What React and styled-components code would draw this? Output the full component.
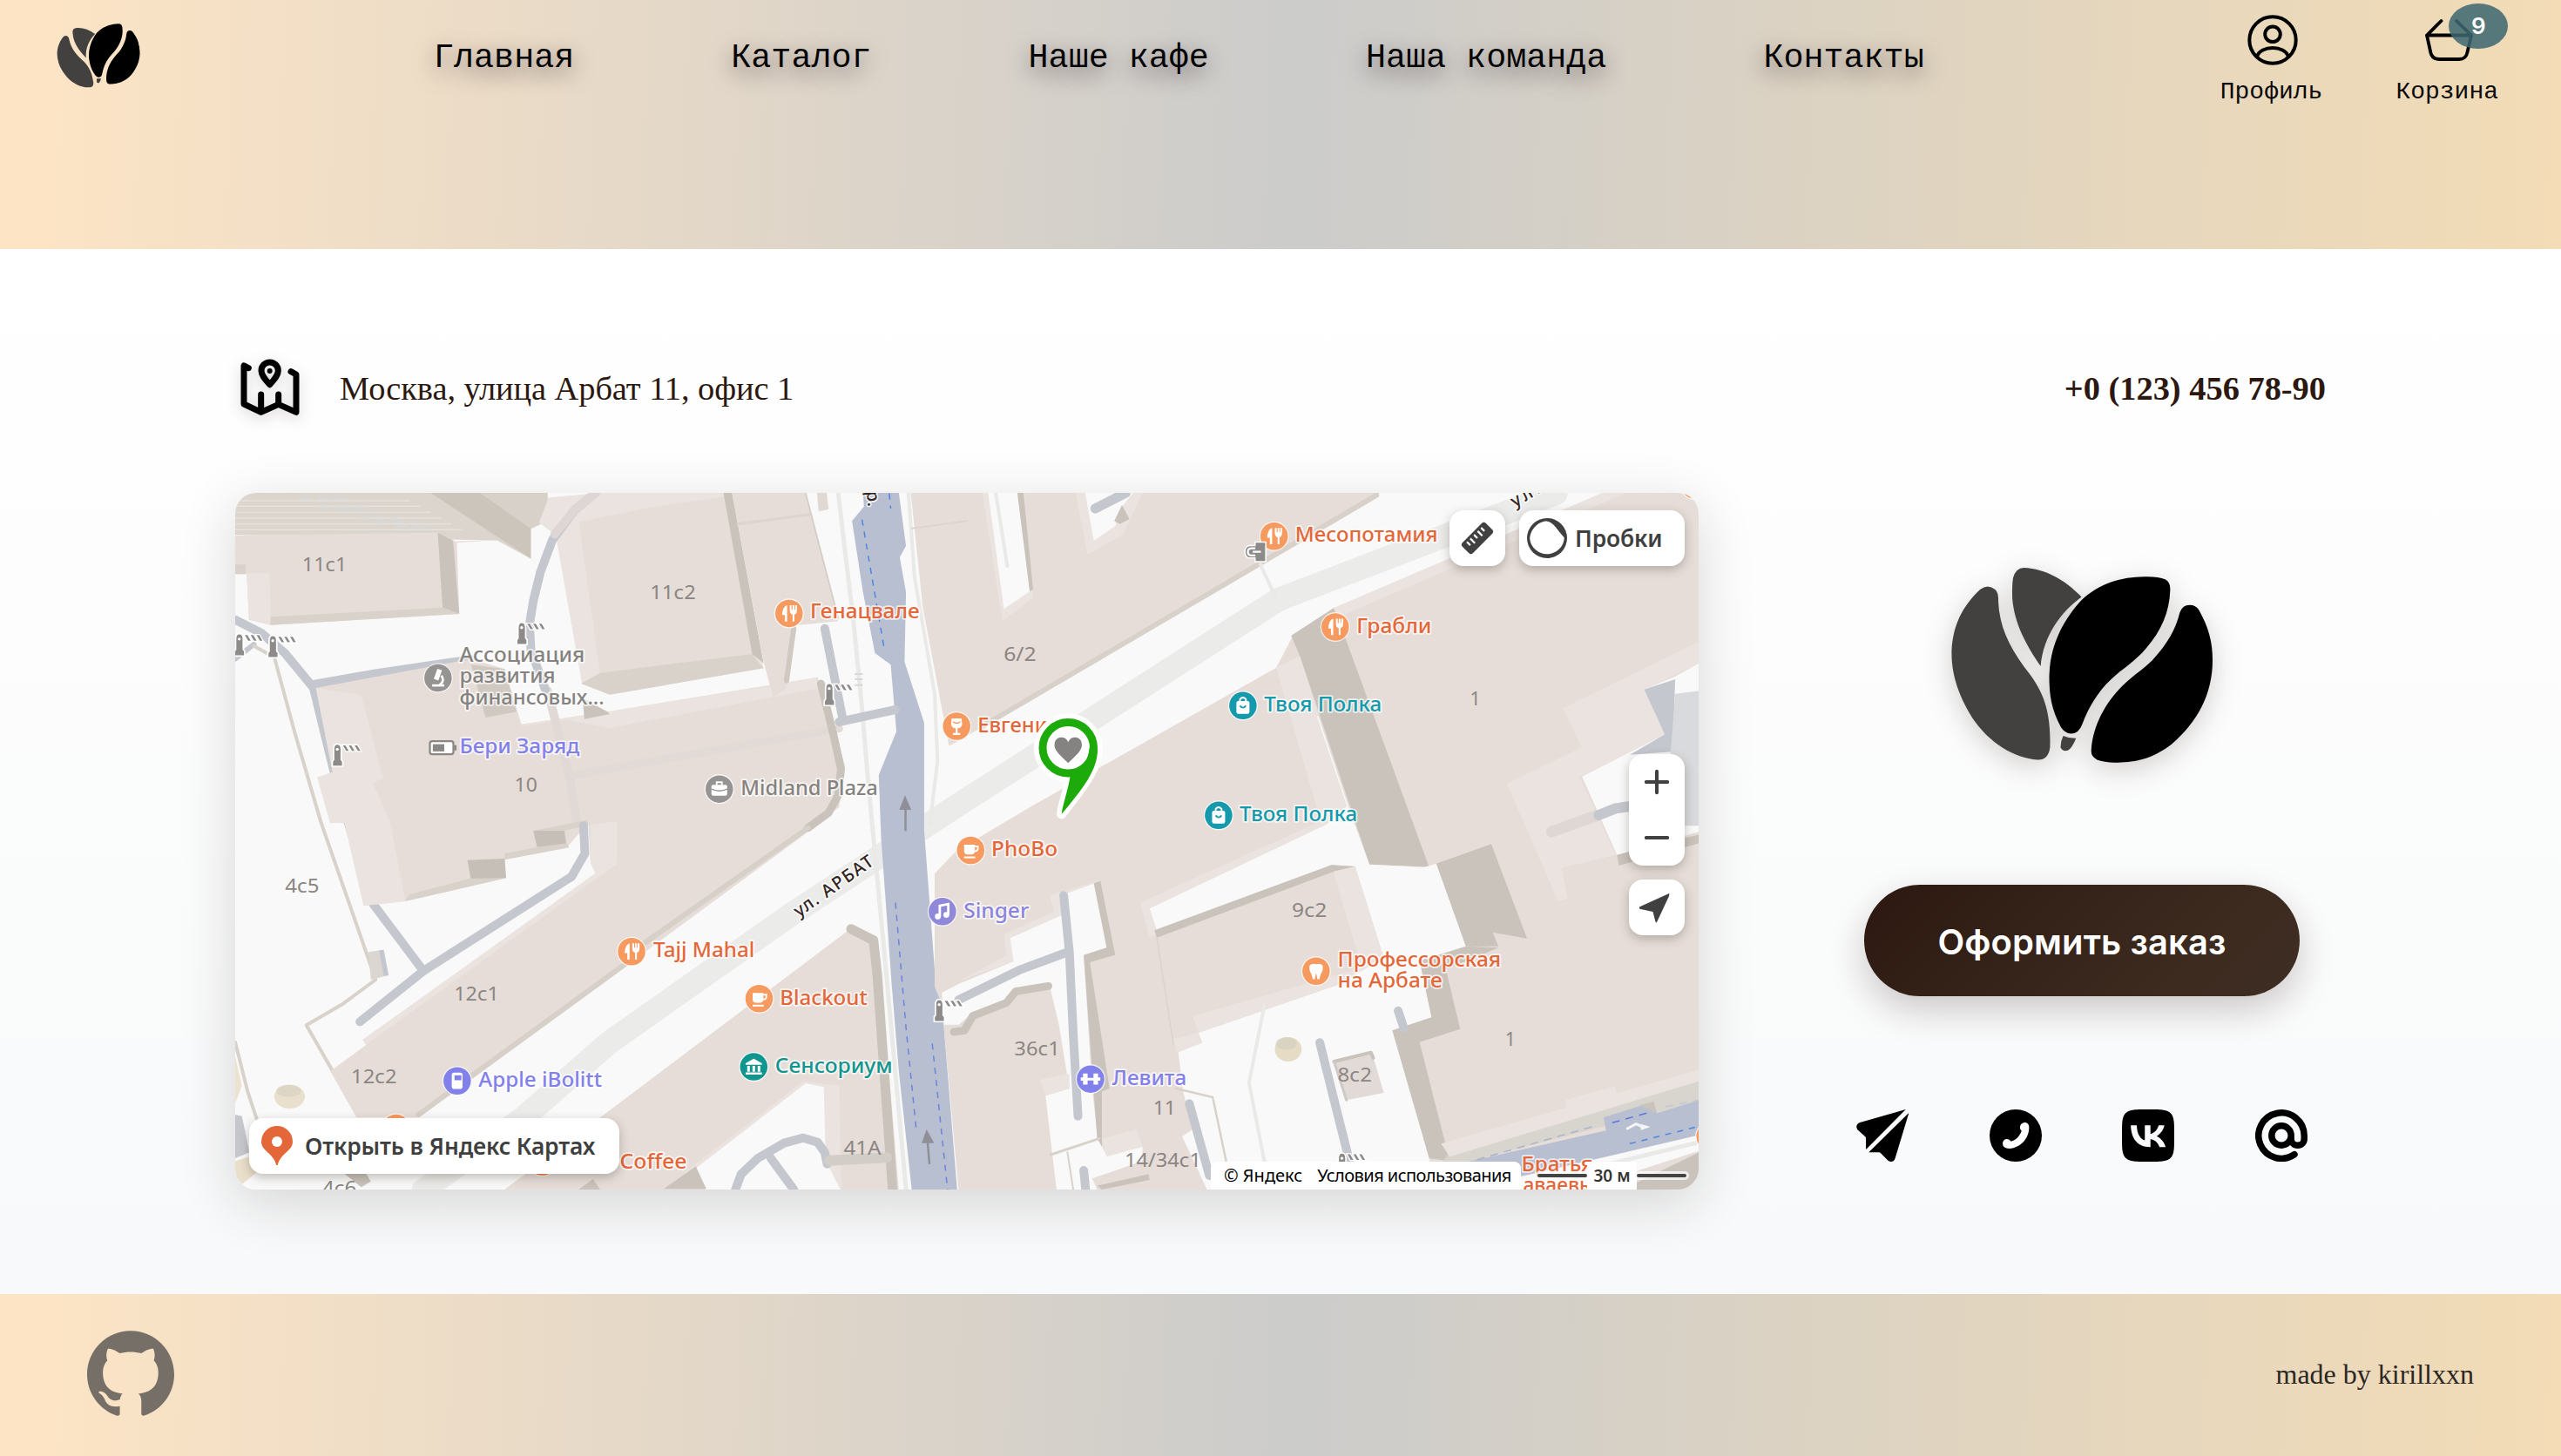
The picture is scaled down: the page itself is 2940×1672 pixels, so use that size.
import React from "react";
import styled, { createGlobalStyle } from "styled-components";
import { SiGithub, SiVk } from "react-icons/si";

const GlobalStyle = createGlobalStyle`
  *, *::before, *::after { box-sizing: border-box; }
  body {
    margin: 0;
    font-family: "Liberation Serif", "Times New Roman", serif;
    background: #fce5c7;
  }
`;

const mono = `"Liberation Mono", "Courier New", monospace`;
const serif = `"Liberation Serif", "Times New Roman", serif`;
const mapFont = `"Noto Sans", sans-serif`;
const warmGradient = `linear-gradient(92deg, #fce4c5 2%, #cccccb 50.5%, #f3dcb6 100%)`;

const Page = styled.div`
  display: flex;
  flex-direction: column;
  width: 2940px;
  height: 1672px;
  overflow: hidden;
`;

const Header = styled.header`
  display: flex;
  align-items: flex-start;
  flex: 0 0 286px;
  padding-left: 66px;
  padding-right: 72px;
  background: ${warmGradient};
`;

const HeaderLogo = styled.a`
  display: block;
  width: 432px;
  padding-top: 28px;
  svg {
    display: block;
    width: 95px;
    height: 71px;
    transform: rotate(-10deg);
  }
`;

const Nav = styled.nav`
  display: flex;
  gap: 180px;
  padding-top: 45px;
`;

const NavLink = styled.a`
  font: 400 38.4px/44px ${mono};
  color: #050505;
  white-space: pre;
  text-shadow: 0 8px 24px rgba(40, 30, 40, 0.6);
`;

const Actions = styled.div`
  display: flex;
  gap: 84px;
  margin-left: auto;
`;

const Action = styled.a`
  position: relative;
  display: flex;
  flex-direction: column;
  align-items: center;
  font: 400 28px/32px ${mono};
  color: #0a0a0a;
  svg {
    display: block;
    width: 64px;
    height: 64px;
    margin: 14px 0 12px;
  }
`;

const Badge = styled.span`
  position: absolute;
  top: 4px;
  left: 61px;
  display: flex;
  align-items: center;
  justify-content: center;
  width: 68px;
  height: 52px;
  border-radius: 50%;
  background: rgba(62, 104, 112, 0.86);
  color: #fff;
  font: 600 26px/1 Inter, sans-serif;
`;

const Contacts = styled.main`
  display: flex;
  flex-direction: column;
  gap: 80px;
  flex: 0 0 1200px;
  padding: 120px 270px;
  background: linear-gradient(180deg, #ffffff 0%, #f8f9fa 100%);
`;

const InfoRow = styled.div`
  display: flex;
  align-items: center;
  justify-content: space-between;
  height: 80px;
  color: #2c1810;
`;

const Address = styled.div`
  display: flex;
  align-items: center;
  gap: 40px;
  font: 400 38.4px/48px ${serif};
  letter-spacing: -0.05px;
  svg {
    width: 80px;
    height: 80px;
    filter: drop-shadow(0 4px 8px rgba(44, 24, 16, 0.18));
  }
`;

const Phone = styled.a`
  font: 700 38.4px/48px ${serif};
`;

const Columns = styled.div`
  display: flex;
  gap: 160px;
  height: 800px;
`;

const MapFrame = styled.section`
  position: relative;
  width: 1680px;
  height: 800px;
  border-radius: 24px;
  box-shadow: 0 16px 64px rgba(30, 24, 20, 0.16);
`;

const MapCanvas = styled.div`
  position: absolute;
  inset: 0;
  overflow: hidden;
  border-radius: 24px;
  background: #f9f9f9;
  font-family: ${mapFont};
  svg.layer {
    position: absolute;
    inset: 0;
    width: 1680px;
    height: 800px;
  }
`;

const MapControl = styled.button`
  position: absolute;
  top: ${(p) => p.$top}px;
  left: ${(p) => p.$left}px;
  width: ${(p) => p.$width || 64}px;
  height: ${(p) => p.$height || 64}px;
  display: flex;
  align-items: center;
  justify-content: ${(p) => (p.$row ? "flex-start" : "center")};
  flex-direction: ${(p) => (p.$column ? "column" : "row")};
  gap: ${(p) => p.$gap || 0}px;
  padding: 0 ${(p) => p.$pad || 0}px;
  border: 0;
  border-radius: 16px;
  background: #fff;
  color: #3f3f3f;
  box-shadow: 0 4px 12px rgba(60, 50, 40, 0.3);
  font: 600 26.4px/1 ${mapFont};
  letter-spacing: -0.15px;
  white-space: nowrap;
`;

const Attribution = styled.div`
  position: absolute;
  left: 1120px;
  bottom: 0;
  display: flex;
  align-items: center;
  gap: 17px;
  width: 356px;
  height: 32px;
  padding-left: 15px;
  border-radius: 8px 8px 0 0;
  background: #fff;
  color: #000;
  font: 400 20px/1 ${mapFont};
  white-space: nowrap;
`;

const Terms = styled.span`
  letter-spacing: -0.55px;
`;

const ScaleBar = styled.div`
  position: absolute;
  left: 1495px;
  bottom: 0;
  display: flex;
  align-items: center;
  width: 171px;
  height: 32px;
  font: 600 19px/1 ${mapFont};
  color: #333;
`;

const ScaleLine = styled.span`
  width: ${(p) => p.$width}px;
  height: 4px;
  border-radius: 2px;
  background: #444;
  box-shadow: 0 0 0 3px rgba(255, 255, 255, 0.7);
`;

const ScaleText = styled.span`
  display: flex;
  align-items: center;
  justify-content: center;
  width: 57px;
  height: 32px;
  background: #fff;
`;

const Side = styled.aside`
  display: flex;
  flex-direction: column;
  align-items: center;
  width: 560px;
  padding-top: 86px;
`;

const SideLogo = styled.div`
  svg {
    display: block;
    width: 300px;
    height: 224px;
    filter: drop-shadow(0 8px 16px rgba(44, 24, 16, 0.2));
  }
`;

const OrderButton = styled.button`
  width: 500px;
  height: 128px;
  margin-top: 140px;
  padding: 4px 0 0;
  border: 0;
  border-radius: 64px;
  background: linear-gradient(135deg, #2c1810 0%, #3d2b20 75%, #3e2d23 100%);
  box-shadow: 0 16px 40px rgba(44, 24, 16, 0.22);
  color: #fff;
  font: 600 40px/1 Inter, sans-serif;
  letter-spacing: 0.1px;
`;

const Socials = styled.div`
  display: flex;
  gap: 92.4px;
  margin-top: 130px;
  color: #000;
  svg {
    display: block;
    width: 60px;
    height: 60px;
  }
`;

const Footer = styled.footer`
  display: flex;
  align-items: flex-start;
  justify-content: space-between;
  flex: 0 0 186px;
  padding: 41px 100px 0;
  background: ${warmGradient};
  svg {
    width: 100px;
    height: 100px;
    color: #756f67;
  }
`;

const Credit = styled.span`
  padding-top: 32px;
  font: 400 32px/38px ${serif};
  color: #2a2724;
`;

/* ---------- drawings ---------- */

const Beans = () => (
  <svg viewBox="358 762 672 628" preserveAspectRatio="none">
    <g fill="#424140">
      <path d="M432,832 Q452,812 471,832 Q480,842 479,870 C482,950 505,1010 545,1080 C590,1150 615,1210 612,1340 Q608,1381 580,1380 C520,1376 455,1325 412,1245 C370,1160 358,1090 359,1030 C362,950 385,888 432,832Z" />
      <path d="M545,762 C600,765 650,800 693,856 C640,905 595,980 588,1079 C550,1010 520,940 515,860 Q514,820 517,795 Q524,762 545,762Z" />
      <path d="M646,1303 Q662,1312 679,1311 Q668,1345 658,1350 Q645,1355 639,1340 Q639,1320 646,1303Z" />
    </g>
    <path d="M855,791 Q890,790 908,799 Q922,808 921,835 C919,905 898,965 860,1020 C830,1065 800,1085 770,1120 C735,1160 710,1215 695,1265 Q686,1296 666,1296 Q650,1295 640,1275 C615,1215 610,1170 610,1110 C612,1020 640,940 690,870 C740,810 795,792 855,791Z" />
    <path d="M946,905 Q953,882 971,882 Q987,882 995,898 C1020,955 1030,1000 1030,1060 C1030,1170 990,1260 925,1330 C875,1378 830,1390 780,1389 Q750,1388 733,1380 Q717,1370 718,1350 C722,1270 755,1195 800,1140 C830,1105 855,1085 875,1060 C915,1005 935,960 946,905Z" />
  </svg>
);

const PersonIcon = () => (
  <svg viewBox="-1 0 64 64" fill="none" stroke="#000" strokeWidth="4">
    <circle cx="32" cy="32" r="26.7" />
    <circle cx="32" cy="25.3" r="8.8" />
    <path d="M14 51 C18 37.5 46 37.5 50 51" />
  </svg>
);

const BasketIcon = () => (
  <svg viewBox="0 0 64 64" fill="none" stroke="#000" strokeWidth="3.8" strokeLinecap="round" strokeLinejoin="round">
    <path d="M25.5 10 L9 26.5 H60 L43 10 M9 26.5 L13.5 47 Q15.5 54 23 54 H46 Q54 54 55.5 46 L60 26.5" />
  </svg>
);

const MapPinIcon = () => (
  <svg viewBox="0 0 24 24" fill="none" stroke="#000" strokeWidth="2.1" strokeLinecap="round" strokeLinejoin="round">
    <path d="M4.6 5 L3 4.2 V17.4 L8.9 20.2 L14.9 17.5 L21 20.2 V7.2 L19.2 6.2 M8.9 14.1 V20 M14.9 14.1 V17.4" />
    <path d="M11.9 10.7 C10 8.6 9 7.4 9 5.9 A2.9 2.9 0 0 1 14.8 5.9 C14.8 7.4 13.8 8.6 11.9 10.7Z" />
    <circle cx="11.9" cy="6" r=".9" fill="#000" stroke="none" />
  </svg>
);

const PlaneIcon = () => (
  <svg viewBox="58 72 168 180" preserveAspectRatio="none">
    <path d="M217,72 L70,117 Q57,122 59,134 Q60,141 65,145 L86,165 Q89,168 89,172 V205 Q88,211 92,207 Z" />
    <path d="M227,84 L183,240 Q180,252 169,252 Q163,252 158,246 L138,224 Q134,220 130,220 H98 Z" />
  </svg>
);

const PhoneIcon = () => (
  <svg viewBox="487 72 168 180" preserveAspectRatio="none">
    <ellipse cx="571" cy="162" rx="84" ry="90" />
    <path
      fill="#fff"
      d="M588,123 Q596,115 605,118 Q613,121 614,132 C615,168 590,204 550,207 Q530,207 529,190 Q530,177 540,174 Q550,172 556,182 C571,178 583,165 590,146 Q580,137 588,123Z"
    />
  </svg>
);

const AtIcon = () => (
  <svg viewBox="0 0 60 60" fill="none" stroke="#000" strokeWidth="7.5" strokeLinecap="round">
    <path d="M45 51.6 A26.2 26.2 0 1 1 56.2 30 V34 A7.4 7.2 0 0 1 41.2 34" />
    <circle cx="30" cy="30" r="11.2" />
  </svg>
);

const WHITE = "#f9f9f9";
const ROOF = "#e6ddd8";
const LIGHT = "#eae3df";
const WALL = "#c9c3bb";
const SOFT = "#d9d2ca";
const RIVER = "#b8bfd0";
const LANE = "#c5c7cf";
const PATH = "#e9e9e7";

const Shape = ({ p, f }) => <polygon points={p} fill={f} />;
const Line = ({ p, s = LANE, w = 10, dash }) => (
  <polyline
    points={p}
    fill="none"
    stroke={s}
    strokeWidth={w}
    strokeDasharray={dash}
    strokeLinecap={dash ? "butt" : "round"}
    strokeLinejoin="round"
    vectorEffect="non-scaling-stroke"
  />
);

const MapBase = () => (
  <svg className="layer" viewBox="36 558 3063 2400" preserveAspectRatio="none">
    {/* street axis */}
    <Line p="2800,560 2220,925 1550,1632 1200,2010 820,2450 640,2710 430,2960" s="#ebebea" w={27} />

    {/* courtyard hall */}
    <Shape p="36,558 450,558 655,785 585,722 36,702" f="#dbd5cd" />
    {[585, 604, 625, 645, 665, 685].map((y, i) => (
      <Line key={y} p={`36,${y} ${400 + i * 22},${y}`} s="#e6e1db" w={1.5} />
    ))}
    {[580, 606, 622, 648, 660, 673].map((y, i) => (
      <Line key={y} p={`${170 + i * 40},${y} ${270 + i * 35},${y}`} s="#d6dbdf" w={1.5} dash="14 6" />
    ))}
    <Shape p="445,558 550,558 655,680 655,785" f="#cbc5bc" />
    <Shape p="550,558 690,558 690,655 655,682" f="#d8d1ca" />
    <Shape p="672,660 692,575 800,558 700,695" f={LIGHT} />

    {/* 11c1 */}
    <Shape p="36,704 460,695 497,725 585,720 500,730 505,975 110,1013 65,995 60,838 36,838" f={ROOF} />
    <Shape p="60,835 108,835 110,1013 65,992" f={LIGHT} />
    <Shape p="36,805 58,805 58,838 36,838" f={SOFT} />
    <Shape p="460,695 492,722 505,975 470,953" f={WALL} />
    <Shape p="110,985 470,953 505,975 110,1013" f={SOFT} />

    {/* lanes on the left */}
    <Line p="36,995 90,1040 140,1110 200,1230 225,1400 255,1600 325,1975 430,2205" />
    <Line p="200,1218 330,1180 530,1132" />
    <Line p="36,1130 75,1080" w={6} />
    <Line p="75,1085 118,1125 160,1380 215,1690 330,2235 260,2320 185,2392 240,2550" s="#d8d2ca" w={4} />

    {/* block 10 / 12c1 */}
    <Shape
      p="205,1230 530,1130 600,1165 635,1355 820,1312 1255,1193 1290,1360 1312,1500 1300,1640 1240,1720 860,2180 415,2710 290,2710 235,2550 310,2460 303,2442 800,1862 780,1835 775,1695 730,1780 600,1820 603,1885 390,1965 305,1980 265,1695 235,1695 208,1538 240,1520"
      f={ROOF}
    />
    <Shape p="205,1230 300,1255 345,1540 325,1560 360,1690 392,1965 305,1980 265,1695 235,1695 208,1538 240,1520" f={LIGHT} />
    <Shape p="780,1700 835,1690 835,1835 310,2460 303,2442 790,1868 780,1835" f={LIGHT} />
    <Shape p="635,1355 820,1310 1250,1195 1262,1230 820,1368 730,1340 635,1362" f={LIGHT} />
    <Line p="690,1240 715,1400 735,1530 752,1700" s="#e0d9d6" w={10} />
    <Line p="745,1530 1300,1370" s="#e2dad6" w={9} />
    <Shape p="530,1150 600,1165 625,1312 560,1332" f="#cfc9c1" />
    <Shape p="763,1265 815,1312 820,1320 767,1337" f={WALL} />
    <Shape p="660,1722 725,1722 730,1778 668,1778" f="#c5bfb7" />
    <Shape p="522,1823 600,1818 603,1885 530,1895" f="#c5bfb7" />
    <Shape p="600,1800 670,1778 730,1765 735,1780 600,1822" f={SOFT} />
    <Shape p="392,1965 603,1885 528,1886 400,1942" f={SOFT} />
    <Shape p="660,1722 772,1685 776,1702 725,1722" f={SOFT} />
    <Line p="1262,1215 1288,1390 1304,1510 1298,1600 1278,1660 1235,1712" s={WALL} w={9} />
    <Line p="1235,1712 890,2112 860,2172 420,2700" s="#d6d0c8" w={6} />
    <Line p="765,1705 768,1800 740,1880 430,2205 297,2380" />
    <Shape p="315,2140 345,2132 357,2220 320,2235" f="#dcd6d2" />
    <Shape p="337,2134 347,2132 357,2220 347,2222" f={LANE} />

    {/* 11c2 */}
    <Shape p="690,575 800,558 1060,558 1142,1162 820,1253 762,1215 708,715" f={LIGHT} />
    <Shape p="755,658 900,610 1062,570 1118,1113 800,1180" f={ROOF} />
    <Shape p="760,1215 800,1178 1118,1113 1142,1162 820,1253" f={SOFT} />
    <Shape p="1058,558 1076,558 1142,1145 1118,1113" f={WALL} />
    <Line p="790,558 745,620 700,720 675,830 660,930 652,1010 655,1100 685,1235" />
    <Line p="790,558 745,620 705,700" s="#ddd6d4" />
    <Shape p="1076,558 1228,558 1298,1000 1208,1015 1190,1230 1162,1262 1142,1140" f={ROOF} />
    <Line p="1088,665 1240,632" s="#dcd4ce" w={3} />
    <Line p="1230,560 1298,990" s="#d5cec6" w={2} />
    <Line p="1205,1025 1190,1205" s="#cfc9c2" w={6} />
    <Shape p="1254,558 1274,558 1278,615 1257,622" f="#e0d8d2" />

    {/* embankment road */}
    <Line p="1298,558 1330,1000 1348,1300 1358,1500 1375,1800 1398,2200 1440,2958" s={PATH} w={5} />
    <Line p="1445,558 1458,850 1500,1250 1506,1480 1490,1700" s={PATH} w={4} />
    <Shape
      p="1350,558 1425,558 1440,740 1427,780 1440,900 1437,1140 1478,1350 1478,1720 1500,2200 1516,2330 1547,2958 1452,2958 1425,2550 1410,2250 1388,1750 1383,1530 1420,1380 1408,1150 1375,1110 1350,900 1327,655 1352,605"
      f={RIVER}
    />
    <Line p="1348,650 1395,1100" s="#4d86e0" w={1.5} dash="7 7" />
    <Line p="1405,560 1408,612" s="#4d86e0" w={1.5} dash="7 7" />
    <Line p="1418,1970 1440,2400 1461,2745" s="#6d83dc" w={1.5} dash="7 7" />
    <Line p="1495,2455 1527,2958" s="#6d83dc" w={1.5} dash="7 7" />
    <Line p="1439,1720 1439,1640" s="#8f9097" w={2.5} />
    <Shape p="1438,1600 1451,1650 1426,1650" f="#8f9097" />
    <Line p="1489,2868 1485,2790" s="#8f9097" w={2.5} />
    <Shape p="1483,2750 1499,2798 1473,2798" f="#8f9097" />
    <Line p="1270,1025 1308,1340" />
    <Line p="1300,1347 1418,1305" />
    {[1182, 1200, 1220].map((y) => (
      <Line key={y} p={`1334,${y} 1348,${y}`} s="#d8d8d8" w={2} />
    ))}

    {/* 6/2 */}
    <Shape p="1450,558 2432,558 1568,1395 1530,1430 1515,1300 1475,950" f={ROOF} />
    <Line p="2425,566 1600,1362" s="#d8d1c9" w={6} />
    <Line p="1452,680 1568,655" s="#dcd4ce" w={2} />
    <g transform="translate(1550 480)">
      <Shape p="50,78 138,78 155,440 92,520" f={LIGHT} />
      <Shape p="62,78 125,78 149,418 95,478" f={WHITE} />
      <Shape p="123,78 136,78 156,410 149,418" f={WALL} />
      <Line p="78,80 102,330" s={PATH} w={4} />
      <Shape p="245,78 385,78 345,220 270,290" f={LIGHT} />
      <Shape p="265,78 365,78 345,120 328,175 330,190 283,242" f={WHITE} />
      <Shape p="342,120 358,168 338,185 326,175" f={WALL} />
      <Line p="286,132 350,78" s={LANE} w={11} />
      <Line p="632,325 664,440" s={PATH} w={4} />
    </g>

    {/* Blackout block */}
    <g transform="translate(0 1500)">
      <Shape p="1310,577 1330,550 1380,587 1425,1458 600,1458 800,1210" f={ROOF} />
      <Line p="1325,560 1372,600 1380,720 1412,1458" s={WALL} w={11} />
      <Shape p="975,1400 1225,1085 1300,1100 1305,1458 1020,1458" f={LIGHT} />
      <Shape p="1000,1385 1230,1092 1268,1105 1272,1360 1303,1458 1020,1458" f={WHITE} />
      <Shape p="933,1456 1000,1378 1022,1456" f={WALL} />
      <Shape p="755,1458 785,1422 800,1458" f={WALL} />
      <Line p="1083,1458 1095,1405 1130,1350 1185,1298 1225,1280 1255,1295 1270,1330 1275,1370" />
      <Line p="1157,1350 1205,1458" />
      <Line p="1280,1358 1400,1348" s="#d3cdc8" w={12} />
      <Line p="36,950 62,1120 82,1220" s="#d8d2ca" w={4} />
      <Shape p="36,1000 50,1100 36,1160" f="#ece2cf" />
      <Shape p="36,1200 50,1205 66,1330 36,1350" f="#c6c7cd" />
      <Shape p="36,1360 66,1345 80,1400 50,1440 36,1420" f="#eadfca" />
      <Shape p="265,1404 310,1404 320,1430 300,1450" f={WALL} />
      <Line p="430,1458 480,1405" s={PATH} w={20} />
      <ellipse cx="150" cy="1138" rx="32" ry="41" fill="#e8dfcc" />
      <ellipse cx="148" cy="1118" rx="26" ry="21" fill="#d6cfc0" opacity=".6" />
    </g>

    {/* right-hand blocks */}
    <g transform="translate(1550 1560)">
      <Shape p="-50,700 -50,310 -5,232 150,80 665,-400 700,-510 785,-605 1380,-1004 1550,-1004 1550,1398 0,1398 -35,760" f={ROOF} />
      <Shape p="785,-605 1350,-1004 1400,-1004 790,-570" f={LIGHT} />
      <Shape p="665,-400 715,-440 820,118 760,140" f={LIGHT} />
      <Shape p="785,-605 810,-500 985,287 860,278 715,-438 696,-510" f={WALL} />
      <Line p="752,-230 815,80" s={WHITE} w={1.5} />
      <Shape p="380,410 770,120 800,200 400,530" f={LIGHT} />
      <Shape
        p="770,140 815,75 860,278 975,287 1000,275 1062,560 965,610 990,805 908,850 985,1290 1000,1398 520,1398 468,1215 490,1190 470,1060 460,925 510,890 502,858 640,780 790,695 890,600 830,285 780,280 415,505 400,430"
        f={WHITE}
      />
      <Shape p="780,280 830,285 890,600 845,640" f={LIGHT} />
      <Shape p="490,800 830,640 880,610 790,695 502,858" f={LIGHT} />
      <Shape p="450,880 502,858 510,893 458,925" f={LIGHT} />
      <Shape p="410,505 780,280 830,285 790,300 415,530" f={WALL} />
      <Line p="415,530 450,900" s="#dbd3cd" w={1.5} />
      <Shape p="1000,275 1115,208 1190,533 1118,512 1130,560 1062,560" f={WALL} />
      <Shape p="965,610 1062,560 1130,565 1020,640 1050,845 965,890 1028,1300 985,1290 908,850 990,805" f={WALL} />

      <Shape p="190,385 300,330 283,345 210,392 220,450 115,535 120,610 0,680 -20,700 100,590 95,520 200,440" f={LIGHT} />
      <Shape
        p="210,388 285,343 310,565 262,590 280,1060 292,1225 310,1280 385,1250 385,1300 280,1360 290,1398 205,1398 182,1075 232,1050 210,830 190,690 120,705 100,750 30,790 0,830 -30,830 -35,720 0,690 115,612 108,532 220,450"
        f={WHITE}
      />
      <Shape p="170,1020 232,1000 232,1050 182,1075" f={LIGHT} />
      <Shape p="283,343 297,335 328,590 275,615 316,1050 300,1060 300,1250 290,1220 262,590 310,565" f={WALL} />
      <Line p="-10,855 12,850 30,800 100,755 120,715 188,697" s={WALL} w={9} />
      <Line p="193,1278 295,1222" s={SOFT} w={3} />
      <Line p="228,1270 240,1398" s={SOFT} w={2} />
      <Shape p="300,1225 372,1190 385,1250 310,1285" f={LIGHT} />
      <Shape p="290,1385 398,1345 400,1365 300,1398" f={WALL} />
      <Line p="220,385 232,580 240,860 250,1145" w={10} />
      <Line p="225,582 130,640 0,745" w={10} />
      <Line p="756,892 780,1050 818,1300" />
      <Line p="920,782 932,842" />
      <Line p="483,1102 525,1350" />
      <Line p="262,1332 266,1398" />
      <Line p="640,765 608,1030 640,1300" s={PATH} w={4} />
      <Line p="455,1050 532,1080 560,1300" s={SOFT} w={2.5} />
      <Shape p="785,955 865,925 890,1065 812,1090" f="#e2dad6" />
      <Line p="786,957 863,926 868,945" s={WALL} w={4} />
      <Line p="786,957 812,1090" s="#cfc9c6" w={3} />
      <ellipse cx="690" cy="915" rx="28" ry="42" fill="#e6dcc6" />
      <ellipse cx="686" cy="895" rx="22" ry="22" fill="#d3cdbf" opacity=".6" />

      <Shape p="1265,-260 1550,-490 1550,-415 1435,-325 1478,-170 1300,-25 1375,245 1262,290 1275,395 1255,405 1148,0 1305,-125" f={LIGHT} />
      <Shape p="1435,-325 1500,-370 1550,-415 1550,165 1378,245 1305,-25 1478,-170" f={WHITE} />
      <Shape p="1435,-325 1500,-360 1495,-110 1405,-100 1478,-170" f={LANE} />
      <Shape p="1500,-310 1550,-320 1550,145 1520,145 1490,-100" f="#d9dadd" />
      <Line p="1242,165 1335,110" s="#dfd7d4" w={13} />
      <Line p="1340,108 1375,85 1405,78" w={12} />
      <Shape p="1378,245 1550,175 1550,205 1382,282" f={WALL} />

      <Shape p="1028,1270 1550,1010 1550,1095 1000,1330" f="#d8d4ce" />
      <Shape p="1010,1240 1550,985 1550,1025 1028,1285" f={LIGHT} />
      <Shape p="1270,1090 1375,1042 1380,1090 1275,1140" f={LIGHT} />
      <Shape p="1350,1150 1450,1098 1462,1135 1550,1090 1550,1215 1200,1345 1000,1398 990,1330 1355,1195" f={RIVER} />
      <Shape p="1425,1108 1455,1095 1462,1135" f={WALL} />
      <Shape p="1550,1210 1200,1345 1080,1398 1300,1398 1550,1265" f={WHITE} />
      <Line p="1550,1235 1250,1355" s={PATH} w={5} />
      <Shape p="1390,1398 1550,1270 1550,1398" f={WALL} />
      <Line p="1085,1295 1330,1180" s="#a9b4cc" w={1.5} dash="9 7" />
      <Line p="1368,1168 1440,1135" s="#5a76d8" w={1.5} dash="9 7" />
      <Line p="1405,1240 1550,1180" s="#4d86e0" w={1.5} dash="7 7" />
      <Line p="1480,1112 1550,1090" s={LANE} w={1.5} dash="9 7" />
      <Line p="1400,1188 1418,1172 1432,1182" s="#f4f5f7" w={3} />
      <Shape p="1428,1172 1448,1182 1428,1194" f="#f4f5f7" />
    </g>
  </svg>
);

const ORANGE = "#e4673a";
const GREY = "#858280";
const TEAL = "#1499ad";
const VIOLET = "#8280ea";

const places = [
  { t: "Генацвале", x: 496, y: 378.7, w: 67, c: ORANGE },
  { t: "Месопотамия", x: 793, y: 331.9, w: 87.3, c: ORANGE },
  { t: "Грабли", x: 830.5, y: 387.8, w: 46, c: ORANGE },
  { t: "Твоя Полка", x: 774, y: 435.9, w: 72, c: TEAL },
  { t: "Твоя Полка", x: 759, y: 503, w: 72, c: TEAL },
  { t: "Евгени", x: 598.5, y: 448.6, w: 43, c: ORANGE },
  { t: "PhoBo", x: 607, y: 524.4, w: 40.5, c: ORANGE },
  { t: "Singer", x: 590, y: 562, w: 40, c: "#8b84dd" },
  { t: "Tajj Mahal", x: 400, y: 586.4, w: 62, c: ORANGE },
  { t: "Blackout", x: 477.5, y: 615.4, w: 53.5, c: ORANGE },
  { t: "Сенсориум", x: 474.5, y: 657.1, w: 72, c: "#10958f" },
  { t: "Apple iBolitt", x: 293, y: 665.4, w: 75.5, c: VIOLET },
  { t: "Левита", x: 681, y: 664.8, w: 45.5, c: VIOLET },
  { t: "Профессорская", x: 819, y: 591.8, w: 100, c: ORANGE },
  { t: "на Арбате", x: 819, y: 604.8, w: 64, c: ORANGE },
  { t: "Coffee", x: 379.5, y: 715.8, w: 41, c: ORANGE },
  { t: "Midland Plaza", x: 453.5, y: 486.9, w: 84, c: GREY },
  { t: "Ассоциация", x: 281.3, y: 405.2, w: 76.7, c: GREY },
  { t: "развития", x: 281.3, y: 418.4, w: 58.7, c: GREY },
  { t: "финансовых...", x: 281.3, y: 431.6, w: 88.7, c: GREY },
  { t: "Бери Заряд", x: 281.3, y: 461.2, w: 73.5, c: VIOLET },
  { t: "Братья", x: 931.5, y: 717.4, w: 44, c: ORANGE },
  { t: "аваевы", x: 932.5, y: 730.4, w: 44, c: ORANGE },
];

const houses = [
  ["11с1", 185, 350, 27.5],
  ["11с2", 398, 367, 28],
  ["6/2", 614.5, 404.6, 20],
  ["1", 900, 432.2, 6.5],
  ["10", 315, 485, 14],
  ["4с5", 174.5, 546.5, 21],
  ["12с1", 278, 613, 27.5],
  ["12с2", 215, 663.3, 28],
  ["41А", 516.5, 707.2, 23],
  ["4с6", 197.3, 731.6, 21],
  ["9с2", 791, 561.6, 21.5],
  ["36с1", 621, 646.4, 28],
  ["11", 706, 682.6, 14],
  ["14/34с1", 688.5, 714.9, 47],
  ["8с2", 819, 662.4, 21],
  ["1", 921.5, 640.6, 6.5],
];

const glyphs = {
  food: (
    <>
      <path d="M-1.2-5 V5 H-2.6 V1 H-4.2 C-4.2-2-3-4.6-1.2-5Z" fill="#fff" />
      <path d="M1-5 V-1.5 M2.7-5 V-1.5 M4.3-5 V-1.5 M1-2 Q1 .2 2.7 .2 Q4.3 .2 4.3-2 M2.7 0 V5" stroke="#fff" strokeWidth="1.1" fill="none" />
      <path d="M1-2.4 H4.3 Q4.2 .4 2.65 .4 Q1 .4 1-2.4Z" fill="#fff" />
    </>
  ),
  cup: (
    <>
      <path d="M-4-3.4 H2.6 V.6 Q2.4 2.6 .4 2.6 H-1.8 Q-4 2.6-4 .4Z" fill="#fff" />
      <path d="M2.6-2.4 H4.4 V-.8 Q4 .6 2.4 .6" stroke="#fff" fill="none" strokeWidth="1" />
      <path d="M-4 4.3 H2.8" stroke="#fff" strokeWidth="1.1" />
    </>
  ),
  wine: (
    <>
      <path d="M-3-4.8 H3 L3.4-1 Q2.8 1.4 0 1.4 Q-2.8 1.4-3.4-1Z" fill="#fff" />
      <path d="M0 1 V4.6 M-2.2 4.8 H2.2" stroke="#fff" strokeWidth="1.2" />
      <path d="M-2.2-2.8 Q0-1 2.3-2.8" stroke="#f79a60" fill="none" strokeWidth=".8" />
    </>
  ),
  bag: (
    <>
      <rect x="-4" y="-2.8" width="8" height="7.8" rx="1.2" fill="#fff" />
      <path d="M-1.8-2.5 V-4 Q0-6 1.8-4 V-2.5" stroke="#fff" fill="none" strokeWidth="1" />
      <path d="M-1.8 0 Q0 2.4 1.8 0" stroke={TEAL} fill="none" strokeWidth="1" />
    </>
  ),
  note: (
    <>
      <path d="M-1.6 3 V-3.6 L3.6-4.6 V2" stroke="#fff" fill="none" strokeWidth="1.5" />
      <circle cx="-2.8" cy="3" r="1.8" fill="#fff" />
      <circle cx="2.4" cy="2" r="1.8" fill="#fff" />
    </>
  ),
  bank: (
    <path d="M0-5 L5-2.2 V-1.2 H-5 V-2.2Z M-4-.6 H-2.4 V3 H-4Z M-.8-.6 H.8 V3 H-.8Z M2.4-.6 H4 V3 H2.4Z M-5 3.4 H5 V4.8 H-5Z" fill="#fff" />
  ),
  phone: (
    <>
      <rect x="-3.3" y="-5" width="6.6" height="10" rx="1.5" fill="#fff" />
      <rect x="-1.6" y="-3.4" width="4.2" height="3" fill={VIOLET} />
    </>
  ),
  gym: <path d="M-6-1 H-4.6 V-3.4 H-1.8 V-.8 H1.8 V-3.4 H4.6 V-1 H6 V1 H4.6 V3.4 H1.8 V.8 H-1.8 V3.4 H-4.6 V1 H-6Z" fill="#fff" />,
  tooth: <path d="M-4-3.4 Q-2.4-5.2 0-4.2 Q2.4-5.2 4-3.4 Q4.6-.6 2.8 2 L2 5 H.8 L0 1 L-.8 5 H-2 L-2.8 2 Q-4.6-.6-4-3.4Z" fill="#fff" />,
  case: (
    <>
      <rect x="-4.8" y="-2.6" width="9.6" height="6.6" rx="1" fill="#fff" />
      <path d="M-1.6-2.6 V-4.2 H1.6 V-2.6" stroke="#fff" fill="none" strokeWidth="1" />
      <path d="M-4.8 0 Q0 2.2 4.8 0" stroke="#969493" fill="none" strokeWidth=".8" />
    </>
  ),
  scope: (
    <>
      <path d="M-.4-5.6 L2.4-4.6 L.2 1.6 L-2.6 .6Z" fill="#fff" />
      <path d="M-3.6 4.6 H3.8" stroke="#fff" strokeWidth="1.4" />
      <path d="M2-1.4 Q4.4 1.6 1 4.4" stroke="#fff" strokeWidth="1.3" fill="none" />
    </>
  ),
};

const pins = [
  ["food", 483.1, 375.7, "#f79a60"],
  ["food", 780.1, 328.4, "#f79a60"],
  ["food", 817.5, 384, "#f79a60"],
  ["bag", 761, 432.2, TEAL],
  ["bag", 746.1, 499.4, TEAL],
  ["wine", 585.7, 444.8, "#f79a60"],
  ["cup", 594.3, 520.8, "#f79a60"],
  ["note", 577, 558.3, "#9088d8"],
  ["food", 386.7, 582.8, "#f79a60"],
  ["cup", 464.8, 611.6, "#f79a60"],
  ["bank", 461.5, 653.4, "#10958f"],
  ["phone", 279.9, 662, VIOLET],
  ["gym", 667.7, 660.9, VIOLET],
  ["tooth", 805.8, 594.8, "#f79a60"],
  ["case", 440.4, 483.3, "#969493"],
  ["scope", 268.2, 415.2, "#969493"],
  ["cup", 332, 711.5, "#f07f45"],
  ["food", 242.5, 691, "#f79a60"],
  ["food", 1037.5, 297, "#f79a60"],
  ["food", 1047, 696, "#f79a60"],
];

const barriers = [
  [319.4, 388],
  [167, 396],
  [146.5, 395],
  [507.7, 425.3],
  [206.5, 462.5],
  [575, 618.9],
  [821.6, 713],
];

const MapLabels = () => (
  <svg className="layer" viewBox="144 301.87 896 426.67" fontFamily={mapFont}>
    {barriers.map(([x, y], i) => (
      <g key={i} transform={`translate(${x} ${y})`}>
        <path d="M-2.6 6.4 V4 L-1.8 3 V-3.6 Q-1.8-6.4 0-6.4 Q2-6.4 2-3.6 V3 L2.9 4 V6.4Z" fill="#8d8b89" stroke="#fff" strokeWidth="1.8" paintOrder="stroke" />
        <path d="M3.4-6 H5 L7-2.6 H5.4Z M7-6 H8.6 L10.6-2.6 H9Z M10.6-6 H12.2 L14.2-2.6 H12.6Z" fill="#8d8b89" stroke="#fff" strokeWidth="1.4" paintOrder="stroke" />
        <circle cx="0" cy="-3.6" r=".9" fill="#fff" />
      </g>
    ))}
    {pins.map(([kind, x, y, color], i) => (
      <g key={i} transform={`translate(${x} ${y})`}>
        <circle r="8.4" fill={color} stroke="#fff" strokeOpacity=".7" strokeWidth="1.4" paintOrder="stroke" />
        {glyphs[kind]}
      </g>
    ))}
    <g fill="#8d8b89" stroke="#fff" strokeWidth="1.6" paintOrder="stroke">
      <path d="M768.8 332.4 H774.6 V343.6 H768.8 V341.4 H765 Q762.6 341 762.6 338 Q762.6 335 765 334.6 H768.8Z" />
    </g>
    <path d="M768.6 335.8 H766 Q764 336 764 338 Q764 340 766 340.2 H768.6 M767 338 H772" stroke="#fff" strokeWidth="1.2" fill="none" />
    <rect x="263.2" y="454" width="14.4" height="8" rx="1.4" fill="#fff" stroke="#8a8785" strokeWidth="1.2" />
    <rect x="265" y="455.8" width="7" height="4.4" fill="#8a8785" />
    <rect x="278" y="456.4" width="1.5" height="3.2" fill="#8a8785" />

    {houses.map(([t, x, y, w], i) => (
      <text key={i} x={x} y={y} textLength={w} lengthAdjust="spacingAndGlyphs" fontSize="12" fill="#8b8683">
        {t}
      </text>
    ))}
    {places.map(({ t, x, y, w, c }, i) => (
      <text key={i} x={x} y={y} textLength={w} lengthAdjust="spacingAndGlyphs" fontSize="12.7" fontWeight="500" fill={c} stroke="#fff" strokeOpacity=".7" strokeWidth="2" strokeLinejoin="round" paintOrder="stroke">
        {t}
      </text>
    ))}
    <g fill="#33251f" fontSize="10.8" fontWeight="500" stroke="#fff" strokeOpacity=".8" strokeWidth="1.8" paintOrder="stroke">
      <text transform="translate(489 562) rotate(-35)" textLength="57" lengthAdjust="spacing">ул. АРБАТ</text>
      <text transform="translate(927.5 311) rotate(-31)" textLength="19" lengthAdjust="spacing">ул.</text>
      <text transform="translate(531.5 310.5) rotate(84)" textAnchor="end">пер.</text>
    </g>

    <g stroke="#fff" strokeWidth="6" strokeLinejoin="round" fill="#fff">
      <circle cx="654" cy="458" r="18" />
      <path d="M672 458 C672.5 472 660 485 650 498.5 C650.5 493 654 484 655.4 475Z" />
    </g>
    <circle cx="654" cy="458" r="15.6" fill="#fff" stroke="#1dab0c" strokeWidth="4.8" />
    <path d="M671.9 458.5 C672.5 471 663 483 650 498.5 C650.5 493 654 484 655.4 474.5 Q666 470 667 458Z" fill="#1dab0c" />
    <path d="M654 467.4 C648 461.6 645.6 459.4 645.6 456.2 A4.3 4.3 0 0 1 654 454.6 A4.3 4.3 0 0 1 662.4 456.2 C662.4 459.4 660 461.6 654 467.4Z" fill="#858381" />
  </svg>
);

const RulerIcon = () => (
  <svg width="38" height="38" viewBox="0 0 38 38">
    <g transform="rotate(-45 19 19)">
      <rect x="0" y="10.5" width="38" height="17" rx="3.5" fill="#404040" />
      <path d="M7.5 13.5 V19 M13 13.5 V21 M19 13.5 V19 M25 13.5 V21 M30.5 13.5 V19" stroke="#fff" strokeWidth="2.2" />
    </g>
  </svg>
);

const TrafficIcon = () => (
  <svg width="48" height="48" viewBox="0 0 48 48">
    <circle cx="24" cy="24" r="23" fill="#404040" />
    <path d="M23.5 4.5 C31 5 36 15 43.8 23.5 A19.9 19.9 0 0 1 4.2 25 C4.5 14 14 4.5 23.5 4.5Z" fill="#fff" />
  </svg>
);

const PlusIcon = () => (
  <svg width="28" height="64" viewBox="0 0 28 64">
    <path d="M1.8 32 H26.2 M14 19.8 V44.2" stroke="#404040" strokeWidth="4" strokeLinecap="round" />
  </svg>
);

const MinusIcon = () => (
  <svg width="28" height="64" viewBox="0 0 28 64">
    <path d="M1.8 32 H26.2" stroke="#404040" strokeWidth="4" strokeLinecap="round" />
  </svg>
);

const ArrowIcon = () => (
  <svg width="40" height="40" viewBox="2 0 40 40">
    <path d="M35 4.5 Q37 3 36 7 L22.5 36 Q21 39 20.2 35.5 L17.5 25 L3.5 22 Q0 20.6 3 19Z" fill="#404040" />
  </svg>
);

const OpenPinIcon = () => (
  <svg width="36" height="46" viewBox="0 0 36 46">
    <path d="M18 0 A18 18 0 0 1 36 18 C36 29 22 31 18.8 45 H17.2 C14 31 0 29 0 18 A18 18 0 0 1 18 0Z" fill="#e4673a" />
    <circle cx="18" cy="18" r="6" fill="#fff" />
  </svg>
);

const navItems = ["Главная", "Каталог", "Наше кафе", "Наша команда", "Контакты"];

export default function App() {
  return (
    <>
      <GlobalStyle />
      <Page>
        <Header>
          <HeaderLogo>
            <Beans />
          </HeaderLogo>
          <Nav>
            {navItems.map((item) => (
              <NavLink key={item}>{item}</NavLink>
            ))}
          </Nav>
          <Actions>
            <Action>
              <PersonIcon />
              Профиль
            </Action>
            <Action>
              <BasketIcon />
              <Badge>9</Badge>
              Корзина
            </Action>
          </Actions>
        </Header>

        <Contacts>
          <InfoRow>
            <Address>
              <MapPinIcon />
              Москва, улица Арбат 11, офис 1
            </Address>
            <Phone>+0 (123) 456 78-90</Phone>
          </InfoRow>
          <Columns>
            <MapFrame>
              <MapCanvas>
                <MapBase />
                <MapLabels />
                <MapControl $top={20} $left={1394}>
                  <RulerIcon />
                </MapControl>
                <MapControl $top={20} $left={1474} $width={190} $row $pad={8} $gap={8}>
                  <TrafficIcon />
                  Пробки
                </MapControl>
                <MapControl $top={300} $left={1600} $height={128} $column>
                  <PlusIcon />
                  <MinusIcon />
                </MapControl>
                <MapControl $top={444} $left={1600}>
                  <ArrowIcon />
                </MapControl>
                <MapControl $top={718} $left={16} $width={425} $row $pad={14} $gap={14}>
                  <OpenPinIcon />
                  Открыть в Яндекс Картах
                </MapControl>
                <Attribution>
                  <span>© Яндекс</span>
                  <Terms>Условия использования</Terms>
                </Attribution>
                <ScaleBar>
                  <ScaleLine $width={57} />
                  <ScaleText>30 м</ScaleText>
                  <ScaleLine $width={57} />
                </ScaleBar>
              </MapCanvas>
            </MapFrame>
            <Side>
              <SideLogo>
                <Beans />
              </SideLogo>
              <OrderButton>Оформить заказ</OrderButton>
              <Socials>
                <PlaneIcon />
                <PhoneIcon />
                <SiVk />
                <AtIcon />
              </Socials>
            </Side>
          </Columns>
        </Contacts>

        <Footer>
          <SiGithub />
          <Credit>made by kirillxxn</Credit>
        </Footer>
      </Page>
    </>
  );
}
